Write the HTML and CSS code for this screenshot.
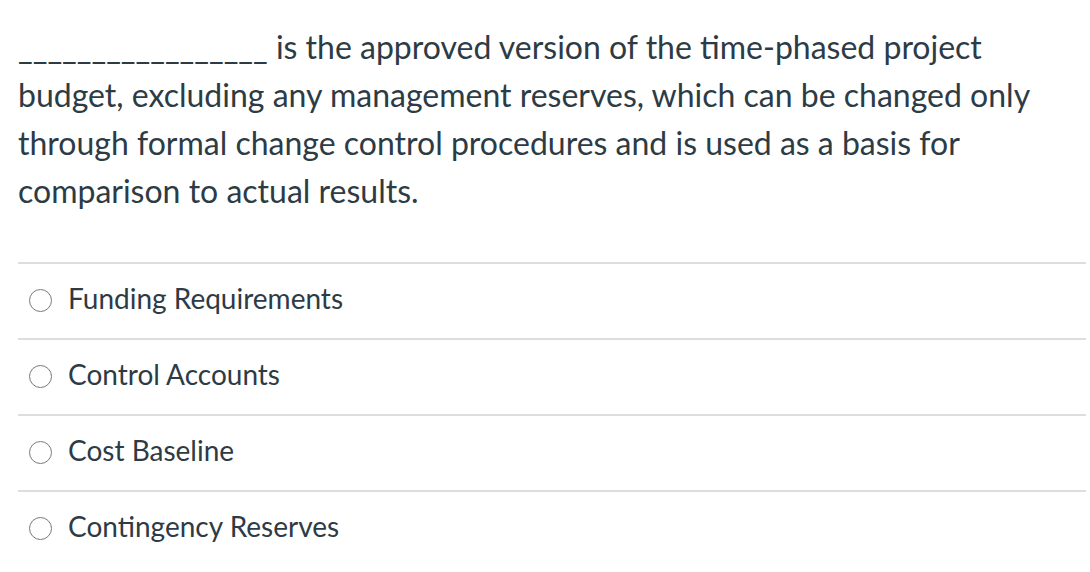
FILE: index.html
```html
<!DOCTYPE html>
<html>
<head>
<meta charset="utf-8">
<link rel="stylesheet" href="styles.css">
</head>
<body>
<div class="quiz">
  <p class="question">_________________ is the approved version of the time-phased project budget, excluding any management reserves, which can be changed only through formal change control procedures and is used as a basis for comparison to actual results.</p>
  <div class="answers">
    <label class="answer"><span class="radio"></span><span class="label">Funding Requirements</span></label>
    <label class="answer"><span class="radio"></span><span class="label">Control Accounts</span></label>
    <label class="answer"><span class="radio"></span><span class="label">Cost Baseline</span></label>
    <label class="answer"><span class="radio"></span><span class="label">Contingency Reserves</span></label>
  </div>
</div>
</body>
</html>
```
FILE: styles.css
```css
html, body {
  margin: 0;
  padding: 0;
  background: #fff;
}
body {
  font-family: Lato, "Open Sans", sans-serif;
  color: #2d3b45;
}
.quiz {
  padding: 23px 4px 0 18px;
}
.question {
  margin: 0;
  font-size: 32px;
  line-height: 48px;
}
.answers {
  margin-top: 47px;
  border-top: 2px solid #dddddd;
}
.answer {
  display: flex;
  align-items: center;
  height: 74px;
  border-bottom: 2px solid #dddddd;
  padding-left: 11px;
}
.answer:last-child {
  border-bottom: none;
}
.radio {
  width: 21px;
  height: 21px;
  border: 1.5px solid #7a7a7a;
  border-radius: 50%;
  margin-right: 16px;
  margin-top: -2px;
  flex: none;
}
.label {
  font-size: 28px;
  margin-top: -6px;
}
```
